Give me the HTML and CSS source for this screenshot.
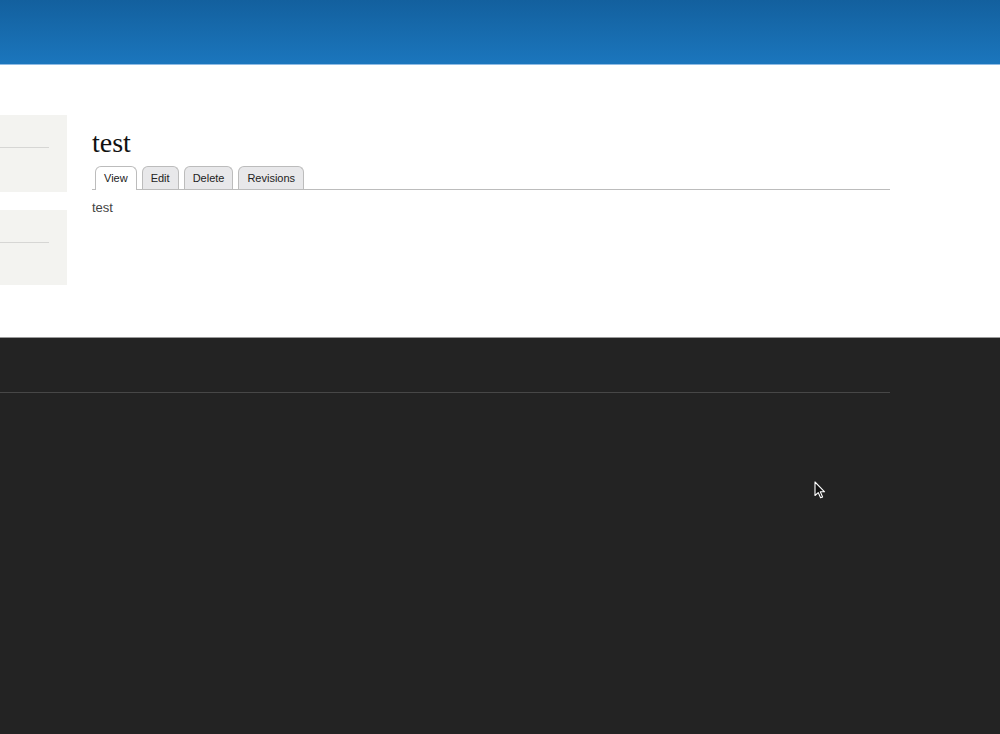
FILE: index.html
```html
<!DOCTYPE html>
<html lang="en">
<head>
    <meta charset="UTF-8">
    <title>test</title>
    <link rel="stylesheet" href="styles.css">
</head>
<body>
    <!-- Header -->
    <header class="site-header"></header>

    <!-- Main -->
    <div class="page">
        <aside class="sidebar">
            <div class="block"><div class="block-rule"></div></div>
            <div class="block"><div class="block-rule"></div></div>
        </aside>
        <main class="content">
            <h1 class="title">test</h1>
            <ul class="tabs">
                <li class="tab active">View</li>
                <li class="tab">Edit</li>
                <li class="tab">Delete</li>
                <li class="tab">Revisions</li>
            </ul>
            <p class="body-text">test</p>
        </main>
    </div>

    <!-- Footer -->
    <footer class="site-footer">
        <div class="footer-rule"></div>
    </footer>

    <svg class="cursor" width="12" height="18" viewBox="0 0 12 18">
        <path d="M1 1 L1 14.5 L4.2 11.6 L6.6 16.8 L8.6 15.9 L6.3 10.8 L10.6 10.8 Z" fill="#111" stroke="#fff" stroke-width="1.1" stroke-linejoin="round"/>
    </svg>
</body>
</html>
```

FILE: styles.css
```css
/* Base */
body {
    margin: 0;
    font-family: 'Liberation Sans', Arial, sans-serif;
    background: #232323;
    min-height: 734px;
    position: relative;
    overflow: hidden;
}

/* Header */
.site-header {
    height: 64px;
    background: linear-gradient(to bottom, #13609e, #1b76bd);
    border-bottom: 1px solid #8fbbe4;
}

/* Main area */
.page {
    display: flex;
    background: #fff;
    height: 272px;
}

.sidebar {
    width: 67px;
    padding-top: 50px;
    display: flex;
    flex-direction: column;
    gap: 18px;
}

.block {
    background: #f3f3f0;
    height: 77px;
    padding-top: 32px;
    box-sizing: border-box;
}

.block + .block {
    height: 75px;
}

.block-rule {
    width: 49px;
    height: 1px;
    background: #d6d6d4;
}

.content {
    margin-left: 25px;
    width: 798px;
    padding-top: 62px;
}

.title {
    margin: 0;
    font-family: 'Liberation Serif', 'Times New Roman', serif;
    font-weight: normal;
    font-size: 28px;
    line-height: 32px;
    color: #111;
}

.tabs {
    list-style: none;
    margin: 7px 0 0;
    padding: 0 0 0 3px;
    display: flex;
    gap: 5px;
    border-bottom: 1px solid #bcbcbc;
}

.tab {
    font-size: 11px;
    line-height: 22px;
    padding: 0 8px;
    color: #222;
    background: #e8e8ea;
    border: 1px solid #bcbcbc;
    border-bottom: none;
    border-radius: 6px 6px 0 0;
}

.tab.active {
    background: #fff;
    margin-bottom: -1px;
    padding-bottom: 1px;
}

.body-text {
    margin: 9px 0 0;
    font-size: 13px;
    line-height: 18px;
    color: #444;
}

/* Footer */
.site-footer {
    border-top: 1px solid #9a9a9a;
    padding-top: 54px;
}

.footer-rule {
    width: 890px;
    height: 1px;
    background: #474747;
}

.cursor {
    position: absolute;
    left: 814px;
    top: 481px;
}
```
